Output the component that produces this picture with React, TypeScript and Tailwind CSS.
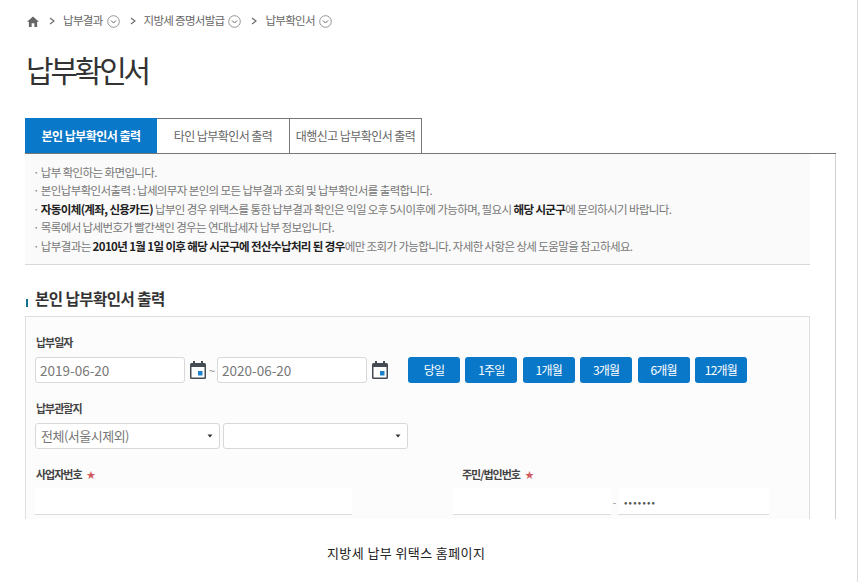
const crumbs = ['납부결과', '지방세 증명서발급', '납부확인서'];

const periods = ['당일', '1주일', '1개월', '3개월', '6개월', '12개월'];

function HomeIcon() {
  return (
    <svg width="12" height="11" viewBox="0 0 13 12" className="shrink-0">
      <path d="M6.5 0.5 L13 6.2 H11 V12 H8 V8 H5 V12 H2 V6.2 H0 Z" fill="#666" />
    </svg>
  );
}

function CrumbArrow() {
  return (
    <svg width="6" height="8" viewBox="0 0 6 8" className="mr-[8px] ml-[10px] shrink-0">
      <path d="M1 1 L5 4 L1 7" fill="none" stroke="#666" strokeWidth="1.1" />
    </svg>
  );
}

function CircleDown() {
  return (
    <svg width="13" height="13" viewBox="0 0 13 13" className="ml-[4px] shrink-0">
      <circle cx="6.5" cy="6.5" r="5.8" fill="none" stroke="#888" strokeWidth="0.9" />
      <path d="M4 5.5 L6.5 8 L9 5.5" fill="none" stroke="#666" strokeWidth="1" />
    </svg>
  );
}

function CalendarIcon() {
  return (
    <svg width="16" height="18" viewBox="0 0 16 18" className="shrink-0">
      <rect x="3" y="0" width="2" height="3" fill="#444b52" />
      <rect x="11" y="0" width="2" height="3" fill="#444b52" />
      <rect x="0" y="2" width="16" height="16" rx="1.5" fill="#444b52" />
      <rect x="1.5" y="6" width="13" height="10.5" fill="#fff" />
      <rect x="8" y="10" width="4.5" height="4.5" fill="#1a82cc" />
    </svg>
  );
}

function SelectArrow() {
  return (
    <svg width="6" height="4" viewBox="0 0 6 4" className="shrink-0">
      <path d="M0.5 0.5 H5.5 L3 3.5 Z" fill="#333" />
    </svg>
  );
}

function Star() {
  return <span className="text-[9px] leading-none font-normal text-[#d0595c]">★</span>;
}

export default function App() {
  return (
    <div className="flex h-[582px] w-[860px] overflow-hidden bg-white font-['Noto_Sans_CJK_KR','Noto_Sans',sans-serif] text-[#666]">
      <div className="h-full w-[858px] shrink-0 border-r border-[#dcdcdc]">
        <div className="h-[519px] w-[836px] overflow-hidden pl-[25px]">
          {/* breadcrumb */}
          <div className="flex h-[42px] items-center pl-[2px] text-[11.5px] tracking-[-0.7px] text-[#666]">
            <HomeIcon />
            {crumbs.map(c => (
              <div key={c} className="flex items-center">
                <CrumbArrow />
                <span className="whitespace-nowrap">{c}</span>
                <CircleDown />
              </div>
            ))}
          </div>

          <h1 className="mt-[5px] h-[46px] pl-px text-[30px] leading-[44px] font-normal tracking-[-3.2px] text-[#333]">
            납부확인서
          </h1>

          {/* tabs */}
          <div className="mt-[25px] flex h-[36px] w-[811px] border-b border-[#777]">
            <div className="flex h-[35px] w-[132px] items-center justify-center bg-[#0a78c8] text-[12px] font-bold tracking-[-0.55px] text-white">
              본인 납부확인서 출력
            </div>
            <div className="flex h-[35px] w-[132px] items-center justify-center border-t border-[#777] text-[12px] tracking-[-0.55px] text-[#666]">
              타인 납부확인서 출력
            </div>
            <div className="flex h-[35px] w-[133px] items-center justify-center border-x border-t border-[#777] text-[12px] tracking-[-0.55px] text-[#666]">
              대행신고 납부확인서 출력
            </div>
          </div>

          {/* panel */}
          <div className="h-[400px] w-[811px] border-r border-[#d0d0d0]">
            <div className="h-[111px] w-[785px] border-b border-[#d8d8d8] bg-[#fafafa] pt-[9px] pl-[8px] text-[11.5px] leading-[18.4px] tracking-[-0.62px] text-[#777]">
              <p>· 납부 확인하는 화면입니다.</p>
              <p>· 본인납부확인서출력 : 납세의무자 본인의 모든 납부결과 조회 및 납부확인서를 출력합니다.</p>
              <p>
                · <b className="text-[#222]">자동이체(계좌, 신용카드)</b> 납부인 경우 위택스를 통한 납부결과 확인은 익일 오후 5시이후에 가능하며, 필요시{' '}
                <b className="text-[#222]">해당 시군구</b>에 문의하시기 바랍니다.
              </p>
              <p>· 목록에서 납세번호가 빨간색인 경우는 연대납세자 납부 정보입니다.</p>
              <p>
                · 납부결과는 <b className="text-[#222]">2010년 1월 1일 이후 해당 시군구에 전산수납처리 된 경우</b>에만 조회가 가능합니다. 자세한 사항은 상세 도움말을 참고하세요.
              </p>
            </div>

            <div className="mt-[19px] flex h-[29px] items-center">
              <span className="mt-[9px] ml-px h-[8px] w-[2px] bg-[#13728c]" />
              <h2 className="ml-[7px] text-[15.5px] font-bold tracking-[-0.5px] text-[#333]">본인 납부확인서 출력</h2>
            </div>

            {/* form */}
            <div className="mt-[3px] h-[210px] w-[785px] border-x border-t border-[#dedede] bg-[#fcfcfc] pl-[9px]">
              <div className="pt-[16px] pl-px text-[11px] leading-[18px] font-bold tracking-[-1px] text-[#444]">납부일자</div>
              <div className="mt-[6px] flex h-[26px] items-center">
                <div className="flex h-[26px] w-[150px] items-center rounded-[3px] border border-[#d8d8d8] bg-white pl-[4px] text-[13.5px] text-[#777]">
                  2019-06-20
                </div>
                <div className="ml-[5px]"><CalendarIcon /></div>
                <span className="ml-[3px] w-[8px] text-[11px] text-[#888]">~</span>
                <div className="flex h-[26px] w-[150px] items-center rounded-[3px] border border-[#d8d8d8] bg-white pl-[4px] text-[13.5px] text-[#777]">
                  2020-06-20
                </div>
                <div className="ml-[5px]"><CalendarIcon /></div>
                <div className="ml-[20px] flex gap-[5.4px]">
                  {periods.map(p => (
                    <div
                      key={p}
                      className="flex h-[26px] w-[52px] items-center justify-center rounded-[3px] bg-[#0a78c8] text-[12px] tracking-[-0.8px] text-white"
                    >
                      {p}
                    </div>
                  ))}
                </div>
              </div>

              <div className="mt-[16px] pl-px text-[11px] leading-[18px] font-bold tracking-[-1px] text-[#444]">납부관할지</div>
              <div className="mt-[6px] flex h-[26px] gap-[3px]">
                <div className="flex h-[26px] w-[185px] items-center justify-between rounded-[3px] border border-[#d8d8d8] bg-white pr-[6px] pl-[5px] text-[13px] tracking-[-0.5px] text-[#777]">
                  전체(서울시제외)
                  <SelectArrow />
                </div>
                <div className="flex h-[26px] w-[185px] items-center justify-end rounded-[3px] border border-[#d8d8d8] bg-white pr-[6px]">
                  <SelectArrow />
                </div>
              </div>

              <div className="mt-[16px] flex">
                <div className="w-[418px]">
                  <div className="flex h-[18px] items-center gap-[5px] pl-px text-[11px] font-bold tracking-[-1px] text-[#444]">
                    사업자번호 <Star />
                  </div>
                  <div className="mt-[5px] h-[27px] w-[317px] border-b border-[#dcdcdc] bg-white" />
                </div>
                <div>
                  <div className="flex h-[18px] items-center gap-[5px] pl-[9px] text-[11px] font-bold tracking-[-1px] text-[#444]">
                    주민/법인번호 <Star />
                  </div>
                  <div className="mt-[5px] flex">
                    <div className="h-[27px] w-[158px] border-b border-[#dcdcdc] bg-white" />
                    <span className="flex w-[7px] items-center justify-center text-[10px] text-[#888]">-</span>
                    <div className="flex h-[27px] w-[151px] items-center border-b border-[#dcdcdc] bg-white pl-[6px] text-[10px] tracking-[1.2px] text-[#555]">
                      •••••••
                    </div>
                  </div>
                </div>
              </div>
            </div>
          </div>
        </div>

        {/* caption */}
        <p className="mt-[25px] pl-[327px] text-[13px] leading-[18px] tracking-[0.4px] whitespace-nowrap text-[#222]">
          지방세 납부 위택스 홈페이지
        </p>
      </div>
    </div>
  );
}
